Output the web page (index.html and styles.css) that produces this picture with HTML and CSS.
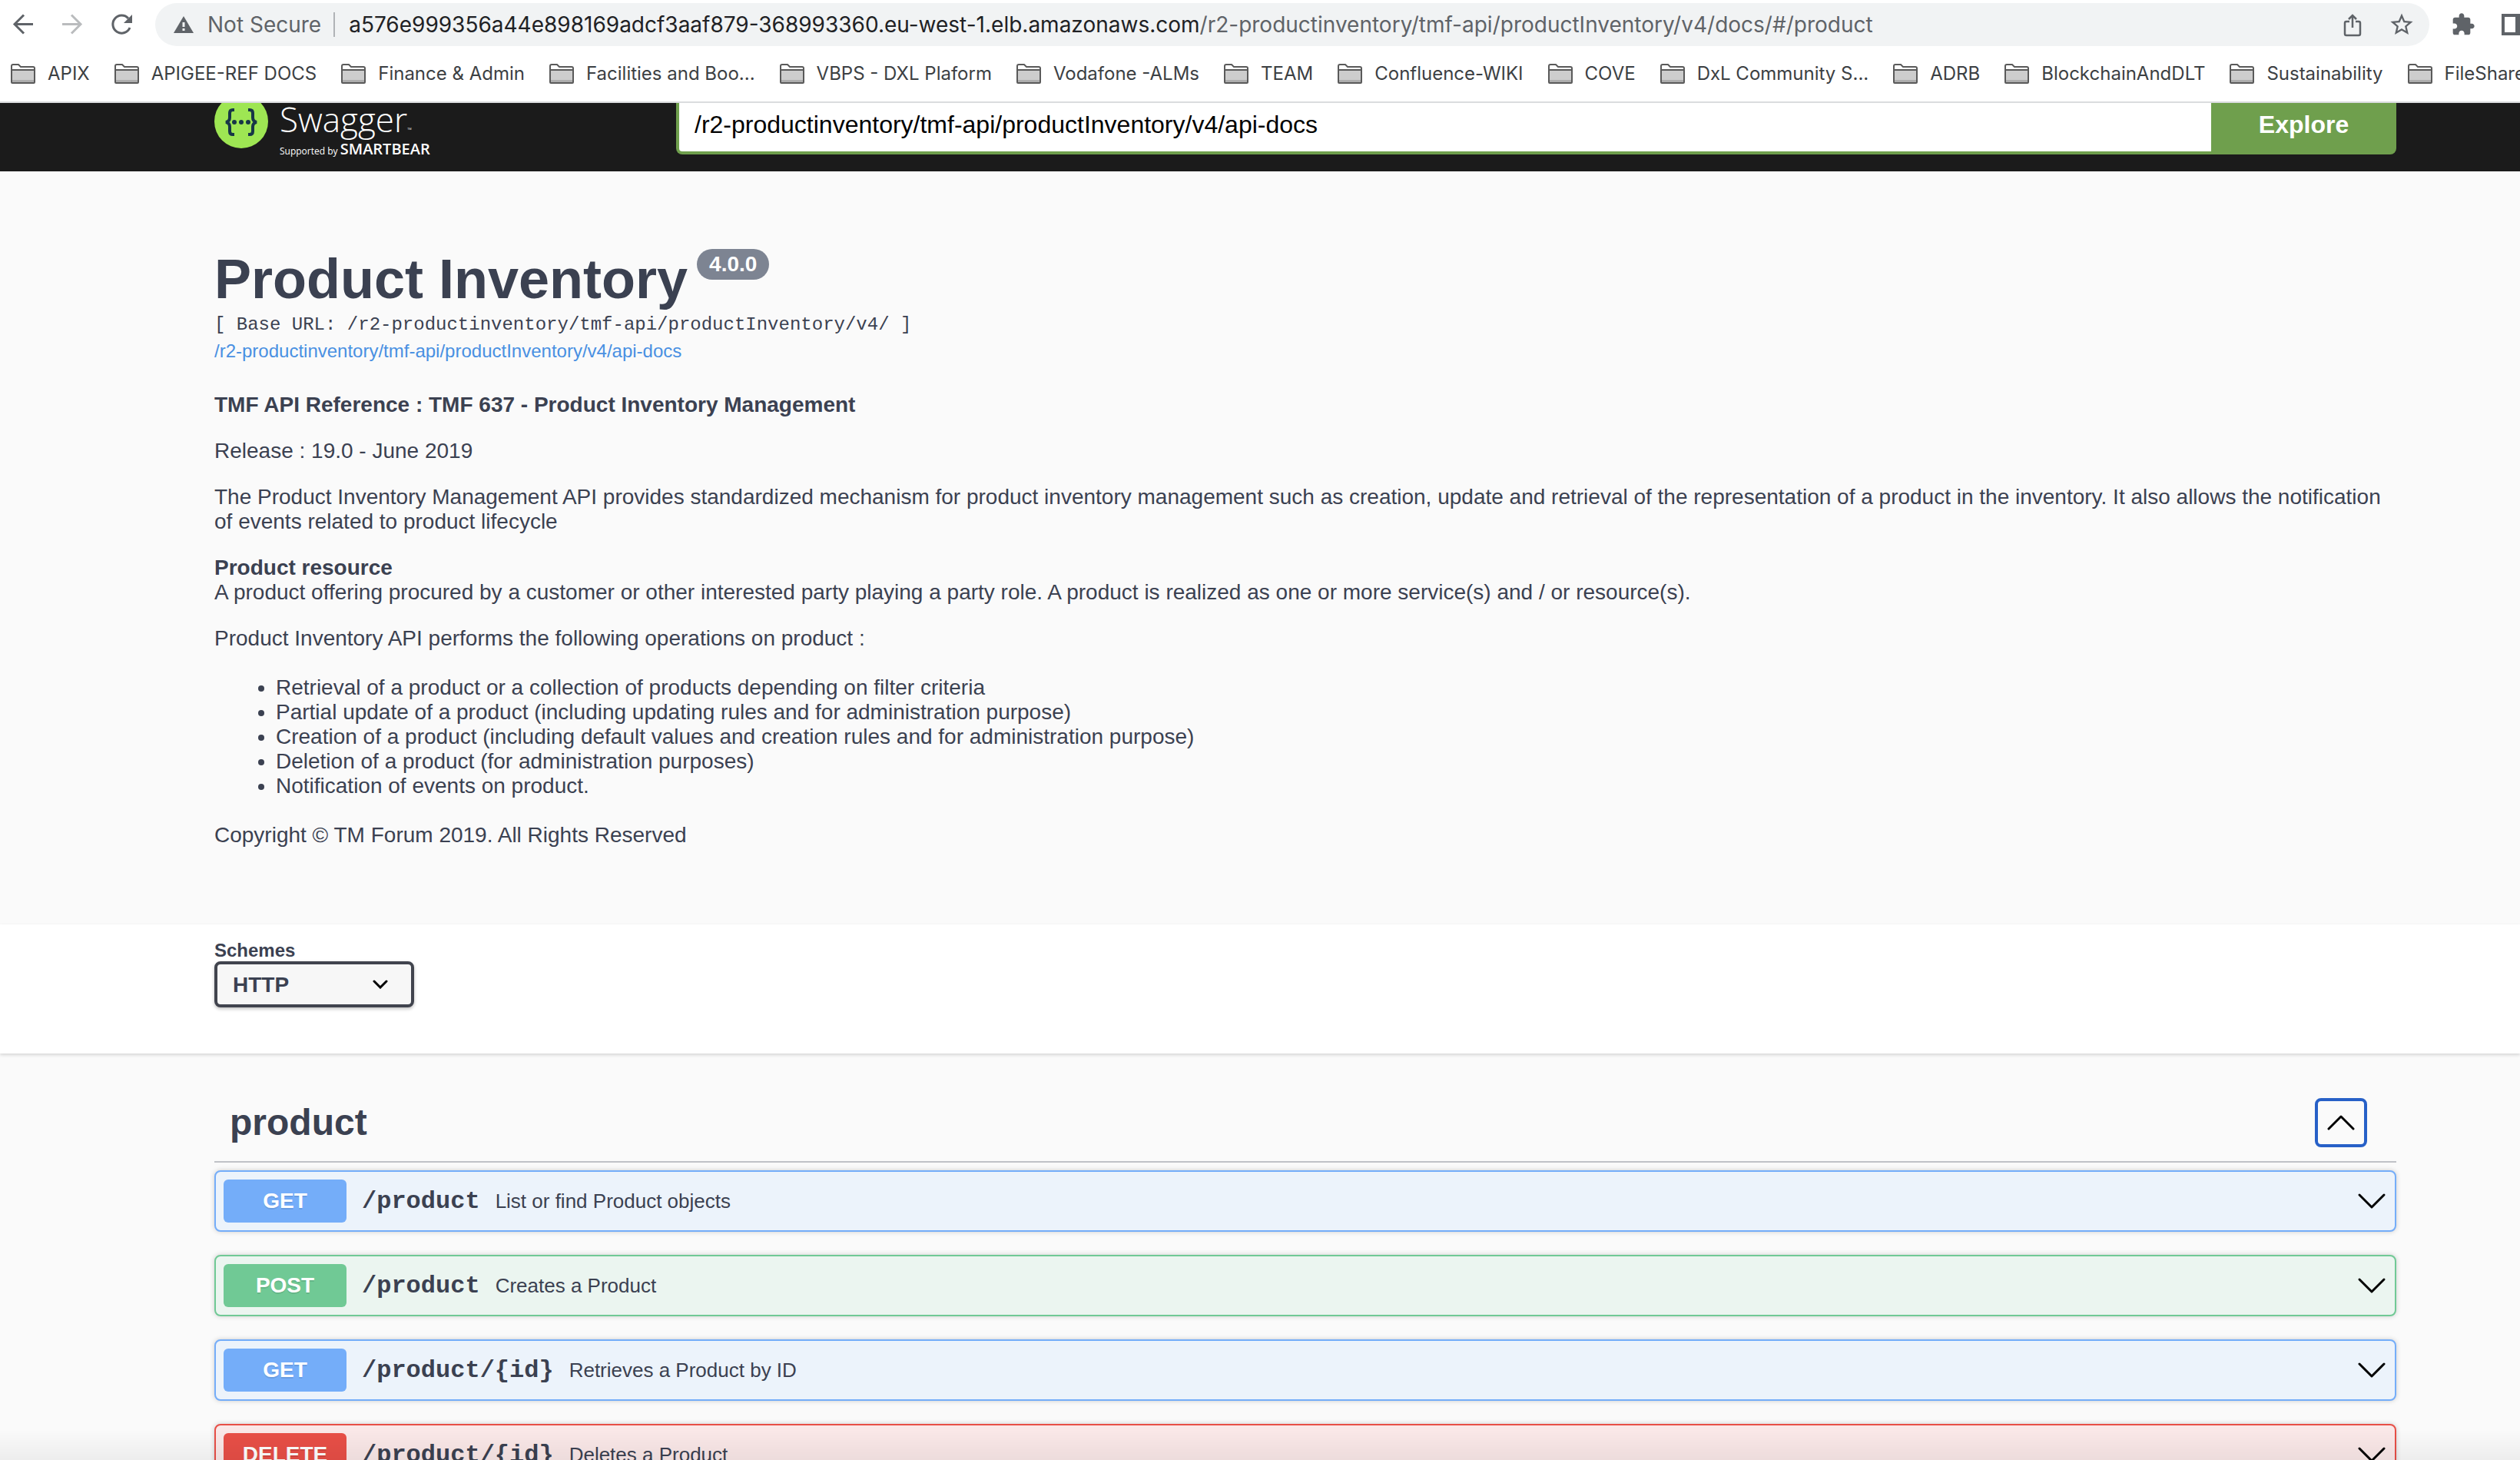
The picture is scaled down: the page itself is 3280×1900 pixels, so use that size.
FILE: index.html
```html
<!DOCTYPE html>
<html lang="en">
<head>
<meta charset="utf-8">
<title>Product Inventory</title>
<link rel="stylesheet" href="styles.css">
</head>
<body>
<svg class="defs" aria-hidden="true">
  <symbol id="folder" viewBox="0 0 32 26">
    <path d="M1 24V3Q1 1 3 1H10L13 4H29Q31 4 31 6V24Q31 25 30 25H2Q1 25 1 24Z" fill="#fff"/>
    <path d="M1 8H31V25H1Z" fill="#cdcdcd"/>
    <path d="M1 21H31V25H1Z" fill="#adadad"/>
    <path d="M1 24V3Q1 1 3 1H10L13 4H29Q31 4 31 6V24Q31 25 30 25H2Q1 25 1 24ZM1 8H31" fill="none" stroke="#5a5a5a" stroke-width="2"/>
  </symbol>
  <symbol id="down" viewBox="0 0 40 40">
    <path d="M4 12L20 28L36 12" fill="none" stroke="#000" stroke-width="3" stroke-linecap="round" stroke-linejoin="round"/>
  </symbol>
</svg>

<header class="chrome">
  <div class="toolbar">
    <nav class="nav">
      <button class="icon" aria-label="Back"><svg viewBox="0 0 32 32"><path d="M29 15.500H5M17 3.500L5 15.500L17 27.500" fill="none" stroke="#5f6368" stroke-width="3"/></svg></button>
      <button class="icon" aria-label="Forward"><svg viewBox="0 0 32 32"><path d="M3 15.500H27M15 3.500L27 15.500L15 27.500" fill="none" stroke="#babcbe" stroke-width="3"/></svg></button>
      <button class="icon" aria-label="Reload"><svg viewBox="0 0 32 32"><path d="M27 20A11.500 11.500 0 1 1 25 8" fill="none" stroke="#5f6368" stroke-width="3"/><path d="M30 3V14H19Z" fill="#5f6368"/></svg></button>
    </nav>
    <div class="omnibox">
      <svg class="warn" viewBox="0 0 26 22"><path d="M13 0L26 22H0Z" fill="#5f6368"/><path d="M13 8V14M13 16V19" stroke="#f1f3f4" stroke-width="3"/></svg>
      <span class="insecure">Not Secure</span>
      <span class="url"><b>a576e999356a44e898169adcf3aaf879-368993360.eu-west-1.elb.amazonaws.com</b>/r2-productinventory/tmf-api/productInventory/v4/docs/#/product</span>
      <button class="icon" aria-label="Share"><svg viewBox="0 0 32 32"><path d="M12 12H8Q6 12 6 14V28Q6 30 8 30H24Q26 30 26 28V14Q26 12 24 12H20M16 20V4M11 9L16 4L21 9" fill="none" stroke="#5f6368" stroke-width="2.500"/></svg></button>
      <button class="icon" aria-label="Bookmark"><svg viewBox="1 1 22 22"><path fill="#5f6368" d="M22 9.240l-7.190-.620L12 2 9.190 8.630 2 9.240l5.460 4.730L5.820 21 12 17.270 18.180 21l-1.630-7.030L22 9.240zM12 15.400l-3.760 2.270 1-4.280-3.320-2.880 4.380-.380L12 6.100l1.710 4.040 4.380.380-3.320 2.880 1 4.280L12 15.400z"/></svg></button>
    </div>
    <div class="extras">
      <button class="icon" aria-label="Extensions"><svg viewBox="0 0 24 24"><path fill="#5f6368" d="M20.500 11H19V7c0-1.100-.900-2-2-2h-4V3.500C13 2.120 11.880 1 10.500 1S8 2.120 8 3.500V5H4c-1.100 0-1.990.900-1.990 2v3.800H3.500c1.490 0 2.700 1.210 2.700 2.700s-1.210 2.700-2.700 2.700H2V20c0 1.100.900 2 2 2h3.800v-1.500c0-1.490 1.210-2.700 2.700-2.700 1.490 0 2.700 1.210 2.700 2.700V22H17c1.100 0 2-.900 2-2v-4h1.500c1.380 0 2.500-1.120 2.500-2.500S21.880 11 20.500 11z"/></svg></button>
      <button class="icon" aria-label="Side panel"><svg viewBox="0 0 32 32"><path fill="#5f6368" fill-rule="evenodd" d="M2 2H32V30H2ZM6 6V26H20V6Z"/></svg></button>
    </div>
  </div>
  <nav class="bookmarks">
    <a href="#"><svg><use href="#folder"/></svg>APIX</a>
    <a href="#"><svg><use href="#folder"/></svg>APIGEE-REF DOCS</a>
    <a href="#"><svg><use href="#folder"/></svg>Finance &amp; Admin</a>
    <a href="#"><svg><use href="#folder"/></svg>Facilities and Boo...</a>
    <a href="#"><svg><use href="#folder"/></svg>VBPS - DXL Plaform</a>
    <a href="#"><svg><use href="#folder"/></svg>Vodafone -ALMs</a>
    <a href="#"><svg><use href="#folder"/></svg>TEAM</a>
    <a href="#"><svg><use href="#folder"/></svg>Confluence-WIKI</a>
    <a href="#"><svg><use href="#folder"/></svg>COVE</a>
    <a href="#"><svg><use href="#folder"/></svg>DxL Community S...</a>
    <a href="#"><svg><use href="#folder"/></svg>ADRB</a>
    <a href="#"><svg><use href="#folder"/></svg>BlockchainAndDLT</a>
    <a href="#"><svg><use href="#folder"/></svg>Sustainability</a>
    <a href="#"><svg><use href="#folder"/></svg>FileShare</a>
  </nav>
</header>

<div class="topbar wrap">
  <a class="logo" href="#" aria-label="Swagger">
    <svg viewBox="0 0 70 70"><circle cx="35" cy="35" r="35" fill="#9ee653"/><g fill="none" stroke="#173647" stroke-width="4"><path d="M26 20H24Q20 20 20 24V30Q20 35 15 36Q20 37 20 42V48Q20 52 24 52H26M44 20H46Q50 20 50 24V30Q50 35 55 36Q50 37 50 42V48Q50 52 46 52H44"/></g><g fill="#173647"><circle cx="26" cy="36" r="3"/><circle cx="35" cy="36" r="3"/><circle cx="44" cy="36" r="3"/></g></svg>
    <span class="brand"><span class="word">Swagger<small>™</small></span><span class="by">Supported by <b>SMARTBEAR</b></span></span>
  </a>
  <form class="explore">
    <input type="text" aria-label="Definition URL" value="/r2-productinventory/tmf-api/productInventory/v4/api-docs">
    <button type="button">Explore</button>
  </form>
</div>

<main>
  <section class="info wrap">
    <h1>Product Inventory<span class="version">4.0.0</span></h1>
    <pre>[ Base URL: /r2-productinventory/tmf-api/productInventory/v4/ ]</pre>
    <a class="spec" href="#">/r2-productinventory/tmf-api/productInventory/v4/api-docs</a>
    <div class="description">
      <p><strong>TMF API Reference : TMF 637 - Product Inventory Management</strong></p>
      <p>Release : 19.0 - June 2019</p>
      <p>The Product Inventory Management API provides standardized mechanism for product inventory management such as creation, update and retrieval of the representation of a product in the inventory. It also allows the notification of events related to product lifecycle</p>
      <p><strong>Product resource</strong><br>A product offering procured by a customer or other interested party playing a party role. A product is realized as one or more service(s) and / or resource(s).</p>
      <p>Product Inventory API performs the following operations on product :</p>
      <ul>
        <li>Retrieval of a product or a collection of products depending on filter criteria</li>
        <li>Partial update of a product (including updating rules and for administration purpose)</li>
        <li>Creation of a product (including default values and creation rules and for administration purpose)</li>
        <li>Deletion of a product (for administration purposes)</li>
        <li>Notification of events on product.</li>
      </ul>
      <p>Copyright © TM Forum 2019. All Rights Reserved</p>
    </div>
  </section>

  <section class="schemes wrap">
    <label for="scheme">Schemes</label>
    <div class="select">
      <select id="scheme"><option>HTTP</option></select>
      <svg viewBox="0 0 20 12"><path d="M2 2L10 10L18 2" fill="none" stroke="#000" stroke-width="3" stroke-linecap="round"/></svg>
    </div>
  </section>

  <section class="operations wrap">
    <div class="tag">
      <h2>product</h2>
      <button class="toggle" aria-label="Collapse product"><svg class="chevron up"><use href="#down"/></svg></button>
    </div>
    <div class="list">
      <button class="op get"><span class="method">GET</span><code>/product</code><span class="summary">List or find Product objects</span><svg class="chevron"><use href="#down"/></svg></button>
      <button class="op post"><span class="method">POST</span><code>/product</code><span class="summary">Creates a Product</span><svg class="chevron"><use href="#down"/></svg></button>
      <button class="op get"><span class="method">GET</span><code>/product/{id}</code><span class="summary">Retrieves a Product by ID</span><svg class="chevron"><use href="#down"/></svg></button>
      <button class="op delete"><span class="method">DELETE</span><code>/product/{id}</code><span class="summary">Deletes a Product</span><svg class="chevron"><use href="#down"/></svg></button>
    </div>
  </section>
</main>
<div class="fade"></div>
</body>
</html>
```
FILE: styles.css
```css
* { box-sizing: border-box; }
html, body { height: 100%; }
body {
  margin: 0;
  overflow: hidden;
  background: #fafafa;
  color: #3b4151;
  font: 28px/32px "Liberation Sans", Arial, sans-serif;
}
button { border: 0; padding: 0; background: none; color: inherit; font: inherit; }
a { text-decoration: none; }
.defs { position: absolute; width: 0; height: 0; }
.wrap { padding-left: 279px; padding-right: 161px; }

/* Browser chrome */
.chrome {
  background: #fff;
  border-bottom: 2px solid #dadcde;
  font-family: Inter, sans-serif;
  overflow: hidden;
}
.toolbar { display: flex; align-items: center; padding-top: 4px; }
.nav { display: flex; flex: none; width: 202px; padding-left: 14px; gap: 32px; }
.icon { flex: none; width: 32px; height: 32px; }
.icon svg { display: block; width: 32px; height: 32px; }
.omnibox {
  display: flex;
  flex: 1;
  align-items: center;
  height: 56px;
  padding: 0 20px 0 24px;
  border-radius: 28px;
  background: #f1f3f4;
  color: #5f6368;
  font-size: 28px;
  white-space: nowrap;
}
.warn { width: 26px; height: 22px; margin-right: 18px; }
.insecure { padding-right: 16px; border-right: 2px solid #b0b3b6; }
.url { flex: 1; padding-left: 18px; }
.url b { color: #202124; font-weight: 400; }
.omnibox .icon { margin-left: 32px; }
.extras { display: flex; flex: none; gap: 32px; width: 118px; padding-left: 28px; }
.bookmarks { display: flex; gap: 32px; padding: 18px 14px; height: 72px; }
.bookmarks a {
  display: flex;
  flex: none;
  align-items: center;
  gap: 16px;
  color: #3c4043;
  font-size: 24px;
  line-height: 34px;
}
.bookmarks svg { width: 32px; height: 26px; }

/* Swagger bar */
.topbar {
  display: flex;
  align-items: flex-end;
  height: 89px;
  padding-bottom: 22px;
  overflow: hidden;
  background: #1b1b1b;
}
.logo { display: flex; flex: none; gap: 15px; width: 601px; color: #fff; }
.logo > svg { width: 70px; height: 70px; }
.brand { display: flex; flex-direction: column; font-family: "Open Sans", sans-serif; }
.word { font-size: 44px; line-height: 64px; font-weight: 300; }
.word small { font-size: 8px; line-height: 8px; }
.by { height: 14px; font-size: 12px; line-height: 14px; }
.by b { font-size: 20px; font-weight: 600; }
.explore { display: flex; flex: 1; }
.explore input {
  flex: 1;
  height: 80px;
  padding: 2px 20px 0;
  border: 4px solid #6f9f4d;
  border-right: 0;
  border-radius: 8px 0 0 8px;
  background: #fff;
  color: #000;
  font: 32px "Liberation Sans", Arial, sans-serif;
}
.explore button {
  width: 241px;
  padding-top: 2px;
  border-radius: 0 8px 8px 0;
  background: #6f9f4d;
  color: #fff;
  font-size: 32px;
  font-weight: 700;
}

/* API information */
.info { padding-top: 96px; padding-bottom: 72px; }
h1 { display: flex; align-items: flex-start; gap: 12px; margin: 0; font-size: 72px; line-height: 88px; }
.version {
  margin-top: 5px;
  padding: 0 16px;
  border-radius: 20px;
  background: #7d8492;
  color: #fff;
  font-size: 28px;
  line-height: 40px;
}
pre { margin: 2px 0 0; font: 24px/28px "Liberation Mono", "Courier New", monospace; }
.spec { display: block; margin-top: 6px; color: #4990e2; font-size: 24px; line-height: 28px; }
.description { padding-top: 40px; }
.description p { margin: 0 0 28px; }
.description ul { margin: 32px 0; padding-left: 80px; }

/* Scheme picker */
.schemes {
  padding-top: 20px;
  padding-bottom: 60px;
  background: #fff;
  box-shadow: 0 2px 4px rgba(0, 0, 0, .15);
}
.schemes label { display: block; font-size: 24px; line-height: 28px; font-weight: 700; }
.select { display: grid; width: 260px; align-items: center; }
.select > * { grid-area: 1 / 1; }
.select svg { justify-self: end; width: 20px; height: 12px; margin-right: 34px; }
select {
  appearance: none;
  width: 100%;
  height: 60px;
  padding: 0 20px;
  border: 4px solid #41444e;
  border-radius: 8px;
  background: #f7f7f7;
  box-shadow: 0 2px 4px rgba(0, 0, 0, .25);
  color: #3b4151;
  font: 700 28px "Liberation Sans", Arial, sans-serif;
}

/* Operations */
.tag {
  display: flex;
  align-items: center;
  justify-content: space-between;
  margin-top: 38px;
  padding: 20px 38px 18px 20px;
  border-bottom: 2px solid #c0c2c7;
}
h2 { margin: 0; font-size: 48px; line-height: 64px; }
.toggle {
  display: grid;
  place-items: center;
  width: 68px;
  height: 64px;
  border: 4px solid #2760c7;
  border-radius: 8px;
}
.chevron { display: block; flex: none; width: 40px; height: 40px; }
.up { transform: rotate(180deg); }
.list { display: grid; gap: 30px; padding-top: 10px; }
.op {
  display: flex;
  align-items: center;
  height: 80px;
  padding: 10px;
  border: 2px solid;
  border-radius: 8px;
  box-shadow: 0 0 6px rgba(0, 0, 0, .19);
  text-align: left;
}
.method {
  width: 160px;
  border-radius: 6px;
  color: #fff;
  font-weight: 700;
  line-height: 56px;
  text-align: center;
  text-shadow: 0 2px 0 rgba(0, 0, 0, .1);
}
.op code { padding: 0 20px; color: #3b4151; font: 700 32px "Liberation Mono", "Courier New", monospace; }
.summary { flex: 1; color: #3b4151; font-size: 26px; }
.get { border-color: #74adf9; background: #ecf3fb; }
.get .method { background: #74adf9; }
.post { border-color: #70c995; background: #ebf5f0; }
.post .method { background: #70c995; }
.delete { border-color: #e84f47; background: #fae8e8; }
.delete .method { background: #e84f47; }
.fade {
  position: fixed;
  inset: auto 0 0;
  height: 40px;
  background: linear-gradient(transparent, rgba(0, 0, 0, .05));
}
```
